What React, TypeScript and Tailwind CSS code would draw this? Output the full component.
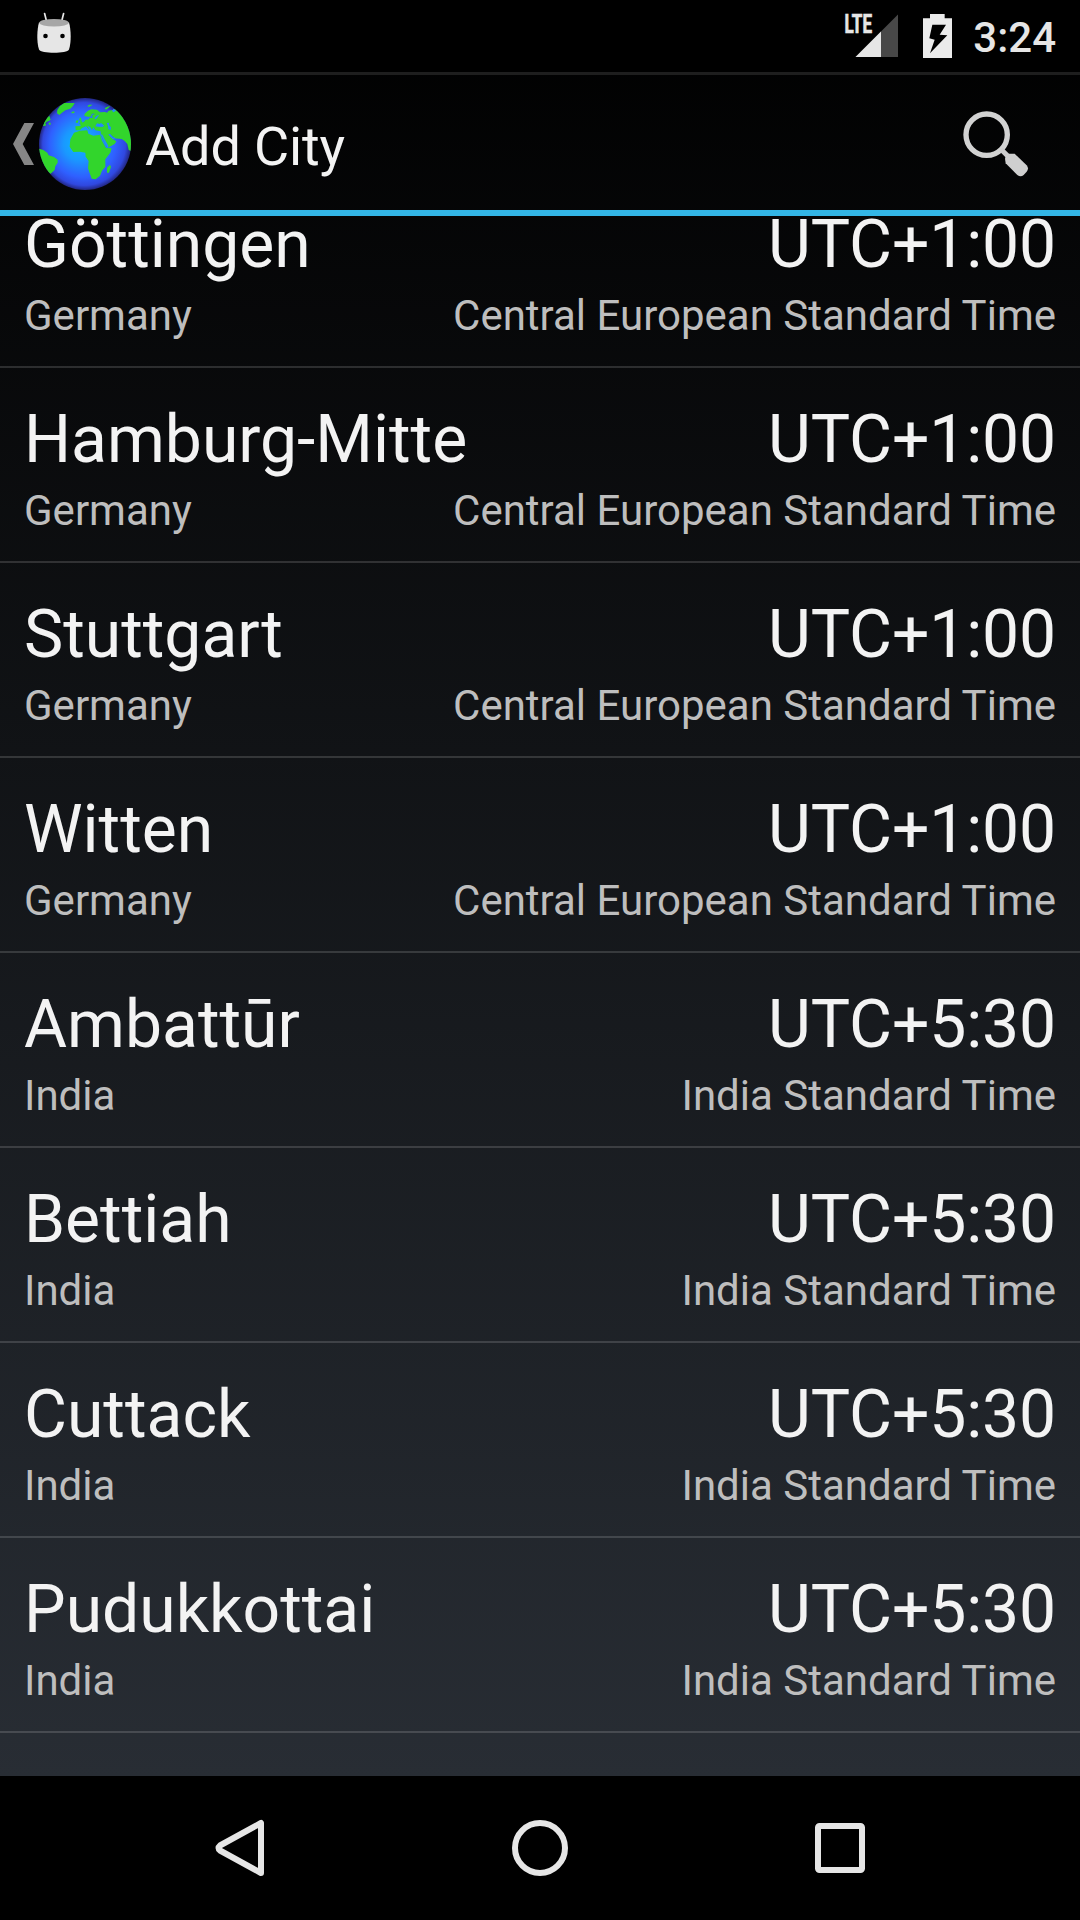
const rows = [
  ["Göttingen", "UTC+1:00", "Germany", "Central European Standard Time"],
  ["Hamburg-Mitte", "UTC+1:00", "Germany", "Central European Standard Time"],
  ["Stuttgart", "UTC+1:00", "Germany", "Central European Standard Time"],
  ["Witten", "UTC+1:00", "Germany", "Central European Standard Time"],
  ["Ambattūr", "UTC+5:30", "India", "India Standard Time"],
  ["Bettiah", "UTC+5:30", "India", "India Standard Time"],
  ["Cuttack", "UTC+5:30", "India", "India Standard Time"],
  ["Pudukkottai", "UTC+5:30", "India", "India Standard Time"],
];

function AndroidHead() {
  return (
    <svg width="36" height="42" viewBox="36 12 36 42">
      <path d="M44.600 13.500l2 8M63.600 13.500l-2 8" stroke="#e6e6e6" strokeWidth="1.7" strokeLinecap="round" />
      <path d="M39 22.500C37 29 36.500 42 39 49.500C40.500 53.800 67.500 53.800 69 49.500C71.500 42 71 29 69 22.500Z" fill="#e6e6e6" />
      <ellipse cx="54" cy="22.700" rx="14.700" ry="3.800" fill="#a6a6a6" />
      <circle cx="45.500" cy="36" r="2.300" fill="#000" />
      <circle cx="62.500" cy="36" r="2.300" fill="#000" />
    </svg>
  );
}

function Signal() {
  return (
    <svg width="54" height="44" viewBox="845 14 54 44" className="overflow-visible">
      <path d="M855.500 57L898 14.500V57Z" fill="#484848" />
      <path d="M855.500 57L881 31.500V57Z" fill="#e6e6e6" />
      <text x="844.500" y="33.300" fontSize="25.500" fontWeight="700" fill="#e6e6e6" stroke="#e6e6e6" strokeWidth="0.7" textLength="27.500" lengthAdjust="spacingAndGlyphs">
        LTE
      </text>
    </svg>
  );
}

function Battery() {
  return (
    <svg width="29" height="44" viewBox="309 42 87 132">
      <path fill="#ebebeb" d="M309 55H330V42H374V55H396V174H309Z" />
      <path fill="#000" d="M337 74H378L359 104L382 106L330 160L344 119L328 115Z" />
    </svg>
  );
}

function Globe() {
  return (
    <svg width="92" height="92" viewBox="117 294 276 276">
      <defs>
        <radialGradient id="sea" gradientUnits="userSpaceOnUse" cx="255" cy="432" r="138" fx="230" fy="432">
          <stop offset="0" stopColor="#0cb4ff" />
          <stop offset="0.35" stopColor="#1a98ff" />
          <stop offset="0.72" stopColor="#2f60ff" />
          <stop offset="0.9" stopColor="#3048e0" />
          <stop offset="1" stopColor="#222680" />
        </radialGradient>
        <clipPath id="disc">
          <circle cx="255" cy="432" r="138" />
        </clipPath>
      </defs>
      <circle cx="255" cy="432" r="138" fill="url(#sea)" />
      <g clipPath="url(#disc)">
        <g fill="#32d52c">
          <path d="M172 330L180 318L192 309L224 309L219 318L211 326L196 331L186 338L178 345L171 340Z" />
          <path d="M214 337L220 334L225 336L221 340L215 340ZM262 318L268 314L278 314L272 318L266 321Z" />
          <path d="M148 347L152 360L145 363L139 366L136 371L130 374L134 359ZM146 368L152 368L152 374L147 374ZM131 372L138 372L137 377L129 378Z" />
          <path d="M114 445L130 450L142 458L146 466L162 471L173 479L173 488L166 499L164 510L152 521L135 510L112 470Z" />
          <path d="M222 398L240 392L262 391L265 401L280 407L300 404L306 422L318 444L335 445L331 458L316 478L316 500L306 512L300 527L287 538L275 536L264 505L266 483L257 470L256 458L240 455L220 456L209 440L211 418Z" />
          <path d="M330 494L333 501L327 518L321 518L321 503Z" />
          <path d="M237 357L243 352L244 361L248 369L237 373L241 366ZM228 362L235 360L234 368L227 368Z" />
          <path d="M226 379L242 378L240 371L252 365L256 360L267 358L268 353L278 354L276 346L286 341L276 341L272 350L264 350L253 348L254 341L264 332L274 328L291 329L300 337L315 336L321 338L326 332L338 330L348 326L410 330L410 460L386 450L382 432L374 423L365 417L344 415L330 402L326 404L338 417L349 424L344 432L324 443L313 428L303 408L302 394L286 391L280 382L276 391L271 382L262 377L270 392L258 379L246 384L240 391L227 391Z" />
          <path d="M314 325L322 320L331 318L326 323L318 329Z" />
        </g>
        <g fill="#2388ff">
          <path d="M286 379L291 370L299 372L303 369L313 377L307 381L294 380Z" />
          <path d="M320 369L328 368L327 376L333 382L332 390L325 388L324 378Z" />
          <path d="M283 356L290 347L298 344L293 351L288 358Z" />
          <path d="M341 326L348 332L340 337L336 332Z" />
          <path d="M302 403L307 404L315 420L325 437L324 444L314 431Z" />
          <path d="M325 402L330 403L339 413L345 412L343 417L337 417Z" />
        </g>
      </g>
    </svg>
  );
}

function Search() {
  return (
    <svg width="66" height="66" viewBox="430 333 198 198">
      <circle cx="501" cy="404" r="62" fill="none" stroke="#d2d2d2" strokeWidth="16" />
      <path d="M544 448L568 472" stroke="#cdcdcd" strokeWidth="15" />
      <path d="M559 466L567 461L585 461L621 496Q629 506 621 515L612 525Q603 533 593 525L558 490L556 476Z" fill="#cfcfcf" />
    </svg>
  );
}

export default function App() {
  return (
    <div className="flex h-[1920px] w-[1080px] flex-col overflow-hidden bg-black font-[Roboto,sans-serif] text-[#f3f3f3]">
      <div className="flex h-[1776px] shrink-0 flex-col bg-[linear-gradient(to_bottom,#000000,#282d34)]">
        <header className="flex h-[75px] shrink-0 items-start border-b-[3px] border-[#1e1e1e] bg-black pr-6 pl-9">
          <div className="mt-3">
            <AndroidHead />
          </div>
          <div className="mt-3.5 ml-auto flex items-start">
            <Signal />
            <div className="ml-6">
              <Battery />
            </div>
            <span className="-mt-[1px] ml-[21px] text-[42px] leading-[50px] font-medium text-[#e6e6e6]">3:24</span>
          </div>
        </header>
        <div className="flex h-[141px] shrink-0 items-start border-b-[6px] border-[#33b5e5] pl-[13px]">
          <svg className="mt-12" width="21" height="42" viewBox="38 369 63 126">
            <path d="M72 369H101L67 432L101 495H72L38 432Z" fill="#868686" />
          </svg>
          <div className="mt-[23px] ml-[5px]">
            <Globe />
          </div>
          <h1 className="mt-10 ml-[14px] text-[54px] leading-[64px] font-normal tracking-[-0.15px]">Add City</h1>
          <div className="mt-9 mr-[51px] ml-auto">
            <Search />
          </div>
        </div>
        <main className="min-h-0 flex-1 overflow-hidden">
          <ul className="-mt-[43px]">
            {rows.map(([city, offset, country, zone]) => (
              <li key={city} className="h-[195px] border-b-2 border-white/15 px-6 pt-[33px]">
                <div className="flex justify-between text-[66px] leading-[78px]">
                  <span>{city}</span>
                  <span className="tracking-[-0.13px]">{offset}</span>
                </div>
                <div className="mt-[7px] flex justify-between text-[42px] leading-[50px] text-[#bebebe]">
                  <span>{country}</span>
                  <span>{zone}</span>
                </div>
              </li>
            ))}
          </ul>
        </main>
      </div>
      <nav className="flex h-36 items-center justify-between bg-black pr-[215px] pl-[215px]">
        <svg width="50" height="58" viewBox="215 1819 50 58" fill="none" stroke="#e6e6e6" strokeWidth="6" strokeLinejoin="round">
          <path d="M261 1823V1873L220 1850.500Q217 1848 220 1845.500Z" />
        </svg>
        <svg width="56" height="56" viewBox="0 0 56 56" fill="none" stroke="#e6e6e6" strokeWidth="6">
          <circle cx="28" cy="28" r="25" />
        </svg>
        <svg width="50" height="50" viewBox="0 0 50 50" fill="none" stroke="#e6e6e6" strokeWidth="6">
          <rect x="3" y="3" width="44" height="44" rx="1.500" />
        </svg>
      </nav>
    </div>
  );
}
